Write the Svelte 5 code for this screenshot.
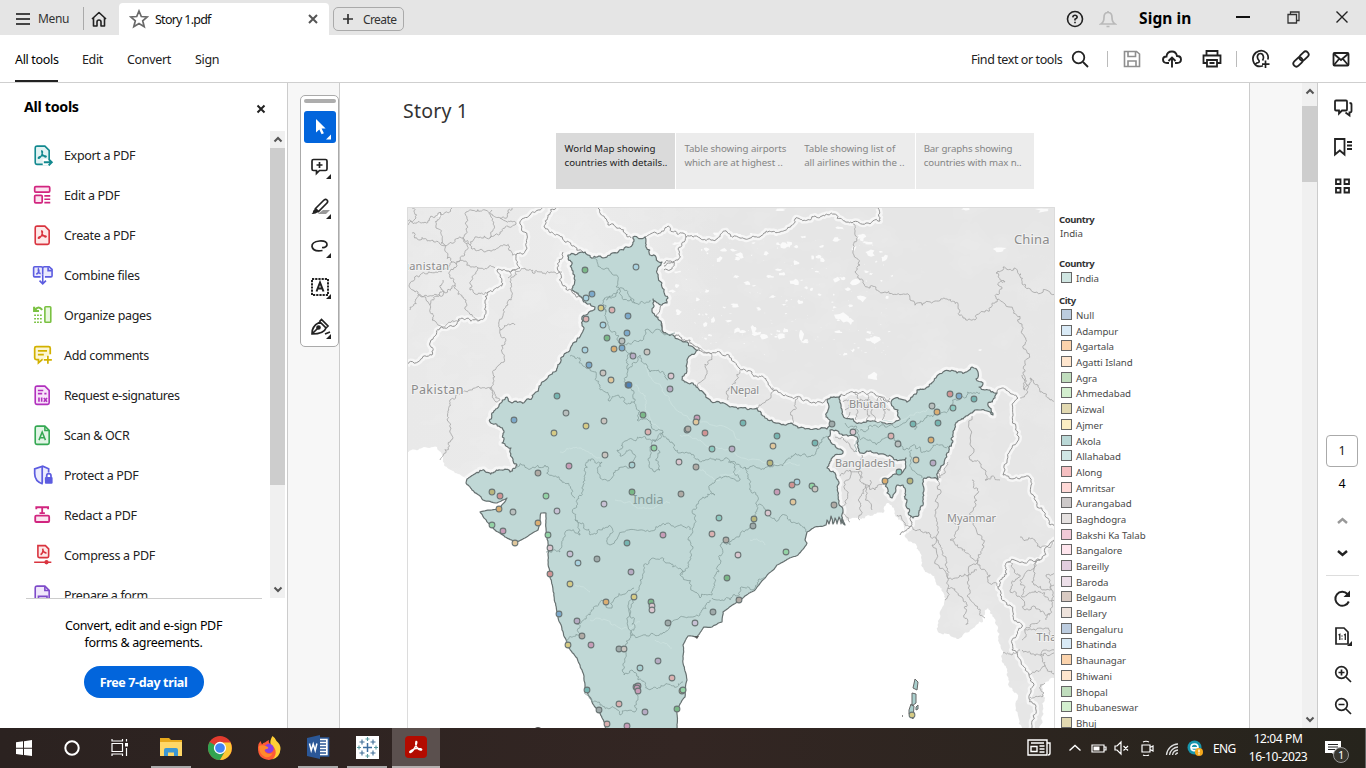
<script>
  // ---------- icon artwork ----------
  const page = (c, f) => `<path d="M4 2h8l4 4v11.500q0 1.500-1.500 1.500h-10q-1.500 0-1.500-1.500v-14q0-1.500 1.500-1.500z" fill="${f}" stroke="${c}" stroke-width="1.500"/>`;
  const acro = 'M9 6.500c1.500 0 .7 3-.8 5.300C7.300 13 6 14 5.800 13.200c-.2-.8 2.500-2.200 5-2.300 2-.1 3 .7 2.200 1.200-1.200.6-4-2.300-4-5.600z';
  const tools = [
    { t: 'Export a PDF', i: page('#12898f', '#e2f3f3') + `<path d="${acro}" stroke="#12898f" stroke-width="1.200"/><rect x="10" y="14" width="10" height="6" fill="#fff"/><path d="M11 17h7M15.500 14l3 3-3 3" stroke="#12898f" stroke-width="1.700"/>` },
    { t: 'Edit a PDF', i: `<g stroke="#d1257f" stroke-width="1.600"><rect x="2.500" y="2.500" width="14" height="5" rx="1" fill="#fce3f0"/><rect x="2.500" y="10.500" width="7" height="7" rx="1" fill="#fce3f0"/><path d="M11.500 11H17M11.500 14.200H17M11.500 17.400H17"/></g>` },
    { t: 'Create a PDF', i: page('#d9343f', '#fde9e9') + `<path d="${acro}" stroke="#d9343f" stroke-width="1.200"/>` },
    { t: 'Combine files', i: `<g stroke="#5c5ce0" stroke-width="1.500"><path d="M8 12H2.500Q1.500 12 1.500 11V3.500q0-1 1-1H8.500Q10 2.500 10 4V10M10 4q0-1.500 1.500-1.500H16L18.700 5v6q0 1-1 1H12" fill="#e9e9fc"/><path d="M4 9.500Q7.500 8 6 5 5.500 8 8 9M15 3v3.200h3.500M10 10v8.500M7 15.500l3 3 3-3"/></g>` },
    { t: 'Organize pages', i: `<g stroke="#7ac142" stroke-width="1.500"><rect x="12" y="2.500" width="5.500" height="14.500" rx=".8" fill="#eaf8e0"/><path d="M2 10.500H10M2 13.800H10M2 17H10" stroke-dasharray="1.700 1"/><path d="M9.500 5.500Q6 1 3 5.500M2 2.500v4h4.500" stroke-width="2"/></g>` },
    { t: 'Add comments', i: `<g stroke="#d2b100" stroke-width="1.600"><path d="M10 14.500H9.500L6 17.500V14.500H4Q2.500 14.500 2.500 13V4Q2.500 2.500 4 2.500H15.500Q17 2.500 17 4V9.500" fill="#fcf6d5"/><path d="M5.500 6.500H14M5.500 10H11M14.800 11V18.500M11 14.800H18.500"/></g>` },
    { t: 'Request e-signatures', i: page('#b130bd', '#f8e4fa') + `<path d="M5.500 6h5M5.500 9h4M11.500 9h2M6.500 12.500v4M9 12.500v4M11 13l3 3.500M14 13l-3 3.500" stroke="#b130bd" stroke-width="1.500"/>` },
    { t: 'Scan & OCR', i: page('#35a853', '#e2f5e6') + `<path d="M12 2v4h4M6.500 15l3-7.500 3 7.500M7.500 12.700h4" stroke="#35a853" stroke-width="1.400"/>` },
    { t: 'Protect a PDF', i: `<g stroke="#5c5ce0" stroke-width="1.600"><path d="M10 18.500Q2.500 16 2.500 9V4.500L10 2l5.500 2.500V8" fill="#ebebfd"/><path d="M9.500 2.500V18M13.700 12.500V11q0-2 2-2t2 2v1.500"/></g><rect x="12" y="12" width="7.200" height="6.500" rx="1" fill="#5c5ce0"/>` },
    { t: 'Redact a PDF', i: `<g stroke="#d1257f" stroke-width="1.700"><path d="M4 5V3H15V5M9.500 3V8.500M7 8.500H12"/><rect x="3" y="10.800" width="13" height="6" rx="1" fill="#fce3f0"/></g>` },
    { t: 'Compress a PDF', i: `<g stroke="#d9343f" stroke-width="1.500"><path d="M5.500 1.500h7l3 3v7q0 1.200-1.200 1.200H6.700q-1.200 0-1.200-1.200z" fill="#fde9e9"/><path d="M8 10Q11 8 10 4.500 10 8 13.500 8.500M2 17H18"/></g><circle cx="13.500" cy="17" r="2" fill="#d9343f"/>` },
    { t: 'Prepare a form', i: page('#7e4bc9', '#f0e7fb') + `<path d="M12 2v4h4M6 11.500h8v4H6z" stroke="#7e4bc9" stroke-width="1.500"/>` }
  ];
  const corner = '<path d="M24 19v5h-5z" fill="#222" stroke="none"/>';
  const quick = [
    '<path d="M12 4.500v13.500l3.300-3 2.300 4.800 2.300-1.100-2.300-4.600h4z" transform="translate(-2 -.5)" fill="#fff" stroke="none"/><path d="M25 21v5h-5z" transform="translate(0 -1.500)" fill="#fff" stroke="none"/>',
    '<path d="M6.500 4.500h12q1.500 0 1.500 1.500v8q0 1.500-1.500 1.500h-6l-3 3v-3h-3q-1.500 0-1.500-1.500V6q0-1.500 1.500-1.500zM12.500 7v6M9.500 10h6"/>' + corner,
    '<path d="M12 18l4-3h7l-4 4h-8z" fill="#999" stroke="none"/><path d="M8.500 13.500l8-8q2-2 3.500-.5t-.5 3.500l-8 8zM8 14l3 3"/><path d="M8 14l3 3q-2.500 2.500-6.500 2 1.500-1 1.500-2.500t2-2.500z" fill="#222" stroke="none"/>' + corner,
    '<path d="M15 12.500q4 .5 5-2.500.5-4.500-7.500-4-8 1-7.500 5.500 1 5.500 10.500 4"/><path d="M24 18v5h-5z" fill="#222" stroke="none"/>',
    '<path d="M5 4h16v16H5z" stroke-width="2" stroke-dasharray="2.200 1"/><path d="M9.500 16.500l3.500-9 3.500 9M10.500 13.500h5" stroke-width="2"/>' + corner,
    '<path d="M5 19Q4.500 11 13 7l6 6q-2 6-14 6zM5.500 18.500l5-5M12.500 6.500l2-2 6.500 6.500-2 2M18 19l5-2"/><circle cx="11.500" cy="12.500" r="1.500" fill="#222"/>' + corner
  ];

  // ---------- map geometry ----------
  let seed = 7;
  const rnd = () => ((seed = (seed * 16807) % 2147483647) / 2147483647);
  const parse = (s) => s.trim().split(/\s+/).map((p) => p.split(',').map(Number));
  function rough(s, amp = 0.22, closed = false) {
    let pts = parse(s);
    if (closed) pts.push(pts[0]);
    for (let k = 0; k < 4; k++) {
      const out = [pts[0]];
      for (let i = 1; i < pts.length; i++) {
        const [a, b] = [pts[i - 1], pts[i]];
        const dx = b[0] - a[0], dy = b[1] - a[1];
        const len = Math.hypot(dx, dy);
        if (len > 2.2) {
          const d = (rnd() - 0.5) * 2 * (len < 9 ? amp * 1.7 : amp);
          out.push([(a[0] + b[0]) / 2 - dy * d, (a[1] + b[1]) / 2 + dx * d]);
        }
        out.push(b);
      }
      pts = out;
    }
    return 'M' + pts.map((p) => p[0].toFixed(1) + ',' + p[1].toFixed(1)).join('L') + (closed ? 'Z' : '');
  }

  // the peninsula coast is smooth, the land frontier is ragged
  const westCoast = '677,732 607,732 600,713 592,702 585,687 582,670 577,658 568,647 562,630 558,617 553,590 550,577 548,560 548,543 546,528 546,513 541,513 540,521 538,530 525,538 515,543 505,537 495,530 480,512 489,510 500,508 507,498 497,503 483,500 472,490 466,483 467,479 476,473';
  const frontier = '476,473 493,473 510,472 517,465 511,448 502,443 500,427 490,422 492,413 507,397 512,403 532,398 542,382 553,372 562,357 570,350 573,343 582,333 582,317 595,307 585,302 572,290 575,280 572,270 568,255 582,252 603,258 617,253 630,247 633,237 645,237 646,247 650,255 662,262 657,273 662,287 668,298 667,303 662,305 653,299 652,310 658,317 662,330 673,335 687,342 698,350 687,360 687,368 682,380 693,383 703,392 730,407 738,409 757,408 765,418 778,423 798,428 827,429 832,425 826,417 828,399 840,396 841,408 845,418 860,423 880,422 900,420 898,410 891,403 892,400 907,402 917,390 933,382 943,372 957,373 968,371 972,367 978,372 976,379 983,383 979,387 985,390 997,393 995,398 988,403 993,415 987,411 972,413 955,425 952,443 947,453 938,480 924,478 923,493 919,512 913,518 909,515 907,500 903,485 897,485 892,498 887,493 883,480 892,476 902,473 906,458 887,456 860,453 857,443 857,437 845,435 830,430 828,437 835,445 843,453 832,458 827,468 835,473 839,482 838,495 843,510 845,525';
  const eastCoast = '845,525 842,518 841,524 839,517 837,524 835,518 833,524 831,516 829,524 827,520 826,525 815,527 807,532 805,540 807,543 798,555 777,565 765,578 755,590 740,600 723,612 722,622 712,627 704,627 697,637 688,636 683,645 683,663 687,680 685,697 677,708 677,732';
  const india = rough(westCoast, 0.05) + rough(frontier, 0.15).replace('M', 'L') + rough(eastCoast, 0.04).replace('M', 'L') + 'Z';
  const land = 'M300,150L1160,150L1160,678L' + rough('1054,678 1045,683 1043,707 1035,732 1022,732 1018,697 1008,677 1003,653 998,627 988,608 983,622 972,629 960,638 949,634 938,632 940,618 944,603 940,587 928,573 920,553 905,537 897,517 887,503 883,513 865,518 848,520 842,522', 0.16).slice(1) + 'L700,540L560,490L467,477L' + rough('467,477 455,473 443,462 437,447 422,448 400,453', 0.12).slice(1) + 'L300,453Z';

  // country borders get a pale halo
  const borders = [
    '543,207 530,215 520,224 527,235 526,250 516,255 520,268 507,271 497,270 503,284 488,292 486,312 480,320 462,318 440,328 431,340 432,355 407,366',
    '556,207 548,215 544,227 560,236 572,246 583,252',
    '563,252 562,284 572,292 583,300',
    '598,208 608,225 620,228 631,238',
    '645,237 668,226 683,233 686,237 700,238 713,240 727,232 740,238 760,237 780,232 795,219 815,216 834,214 852,223 866,223 880,221 878,208',
    '686,237 678,260 664,264',
    '664,266 674,262 670,270 664,270',
    '662,304 656,316 664,332 680,337 698,347 720,352 742,370 752,372 766,380 776,390 796,397 828,399 841,394 856,392 875,394 890,402',
    '997,393 1002,388 1018,398 1019,437 1003,475 1030,478 1035,500 1050,525 1060,527',
    '900,535 912,522 910,512',
    '1060,540 1040,560 1008,562 1004,577 998,587 1010,605 1022,627 1012,650 1029,675 1029,698 1036,710 1028,732'
  ].map((s) => rough(s, 0.18));

  const regions = [
    '853,224 857,240 853,251 860,265 855,272 870,288 885,292 910,300 935,301 947,299 958,307 963,318 975,320 985,312 997,302 998,285 1005,282 996,273 1003,267 1014,268 1022,283 1033,292 1060,300',
    '997,300 1010,307 1022,330 1024,345 1025,370 1025,390 1030,378 1040,392 1050,400 1060,402', '1020,398 1026,380 1022,375',
    '972,416 970,460 985,470 985,480 992,476 1000,480',
    '948,462 937,478 935,510 937,535', '945,454 937,480',
    '972,480 976,495 970,515 982,545 980,565 988,580 998,587',
    '897,515 905,525 925,532 937,540 946,557 948,575 945,600',
    '937,535 932,545 947,577 960,575 977,570',
    '950,520 958,530 950,540 965,550 978,560 970,590 975,605 985,618',
    '948,588 962,597 966,612 966,625',
    '1040,560 1020,580 1022,597 1040,592 1054,600',
    '1008,562 1020,575 1010,590 1025,610 1050,615',
    '1025,630 1045,628 1060,645', '1029,675 1045,665 1044,650 1060,655', '1045,665 1054,680',
    '1022,650 1040,655 1060,650', '1003,653 1012,655 1020,650', '1030,697 1042,697 1045,683',
    '1040,560 1034,585 1046,590 1060,585', '1060,560 1046,575 1052,600 1046,620', '1020,537 1040,548 1060,538', '1022,640 1030,625 1040,620',
    '407,220 425,222 440,212 452,208', '412,233 420,240 440,244 463,238 466,212', '440,212 436,228 441,243 452,262 436,272 410,283', '407,226 416,218 412,208',
    '463,238 470,245 490,238 500,232 516,224', '490,238 492,210', '463,238 465,255 450,275 455,285 466,300 480,320', '470,245 485,252 500,246 516,255',
    '466,212 485,210 500,218 516,224', '410,283 415,292 430,305 432,320 460,320', '452,262 478,268 495,268', '478,268 470,290 488,292', '410,310 418,295 440,296 443,280', '500,218 512,208', '455,285 440,292 430,305',
    '516,271 510,282 508,305 500,330 502,352 495,370 490,388 500,400', '508,278 526,270 540,272 562,272', '500,330 515,325',
    '500,400 487,388 470,390 450,400 447,420 451,440 440,460',
    '740,370 736,380 728,400', '772,388 768,400 757,408', '798,397 793,410 791,425',
    '698,349 712,356 706,375 698,387', '862,455 860,470 866,485 858,500 860,520', '850,470 846,500 850,522', '866,485 875,490 886,484', '870,480 872,510', '840,476 850,470 862,478', '835,437 850,445 857,452',
    '845,410 855,404 865,410 878,404 890,410', '855,392 856,420', '868,395 866,422', '880,398 882,420', '843,402 860,399 890,398', '850,412 848,420', '872,408 874,422'
  ].map((s) => rough(s, 0.22));

  const states = [
    '593,257 600,267 620,290 635,303 650,300', '618,292 603,300 606,312 598,308', '606,312 610,330 622,345 632,352 628,370 627,385 634,392 634,402',
    '635,303 622,288 606,300', '622,345 640,340 645,330 675,333', '570,356 580,358 583,366 596,372 600,385 608,400 622,397 625,403 634,402',
    '634,402 640,412 637,420 648,420 663,432 655,442 640,437 625,441 617,450 620,456 632,452 633,465 618,470 612,478 600,478 602,462 588,460 585,475 583,485 577,500 575,520 580,535',
    '628,370 640,355 650,372 668,380', '517,467 545,465 560,480 575,498', '663,432 675,450 690,453 705,460 725,458 735,465 740,480',
    '663,432 654,440 648,460 655,472 660,470 658,450', '728,462 745,467 758,468 770,467 785,462 800,456 812,455 822,442 828,437',
    '740,480 715,482 710,485 715,495 700,500 695,520 688,540 690,560 680,575 700,598 712,595 715,575 720,560 720,545 730,545 740,535 755,520 758,500 750,485 745,467',
    '758,505 775,520 785,515 800,525 806,532', '575,520 590,535 612,528 610,545 640,530 655,530 665,525 690,530',
    '546,552 560,552 570,530 580,535', '634,598 640,580 650,560 670,563 682,575', '634,598 633,635 650,635 670,625 688,617 700,615 710,600',
    '576,622 590,615 602,600 612,608 634,588', '633,598 628,605 634,620 632,635', '576,622 580,635 568,643', '633,635 624,650 624,675 632,670 638,680 650,690 665,685 683,682',
    '585,692 600,705 620,715 635,712 638,700 636,690', '712,598 730,600 740,588 752,590 765,578', '845,423 858,430 856,452', '860,440 885,438 898,440 905,450 913,445 925,452',
    '915,430 925,418 945,412 958,400 980,393', '860,430 885,427 910,418', '925,452 940,445 950,448', '922,478 912,470 912,450'
  ].map((s) => rough(s, 0.22));

  const rivers = ['635,385 645,405 660,430', '680,435 700,440 725,450 760,460 800,465', '645,365 665,395 690,420 740,440', '560,452 580,448 600,458', '700,470 720,480', '590,620 620,628 640,622', '850,428 880,423 910,415 940,405', '720,475 740,470', '575,585 590,592', '655,640 672,648', '750,540 765,545', '615,500 640,508 670,503'].map((s) => rough(s, 0.15));

  const blob = (x, y, w, h) => {
    let d = '';
    for (let i = 0; i < 9; i++) {
      const a = (i / 9) * 6.283, r = 0.35 + rnd() * 0.75;
      d += (i ? 'L' : 'M') + (x + Math.cos(a) * w * r).toFixed(1) + ',' + (y + Math.sin(a) * h * r).toFixed(1);
    }
    return d + 'Z';
  };
  const lakes = Array.from({ length: 230 }, () => {
    const x = 668 + rnd() * 225, y = 232 + rnd() * 125, w = 0.5 + Math.pow(rnd(), 3) * 5;
    return y < 345 || x > 745 ? blob(x, y, w, w * (0.3 + rnd() * 0.7)) : '';
  }).join('') + [[842, 317, 8, 6], [873, 340, 8, 4], [782, 336, 6, 4], [754, 329, 4, 6], [801, 334, 3, 8], [870, 253, 6, 4], [1000, 250, 8, 3], [873, 377, 6, 5], [850, 321, 5, 4], [735, 305, 5, 3], [1044, 210, 10, 3], [965, 209, 6, 2], [737, 330, 6, 4], [868, 243, 7, 2], [855, 282, 6, 4], [840, 228, 6, 2], [780, 210, 8, 2], [440, 215, 6, 2], [980, 350, 3, 1], [872, 340, 4, 3]].map((b) => blob(...b)).join('');

  const C = { g: '#7ab887', G: '#93d3a5', b: '#7ca9cb', B: '#4f80b5', l: '#a9d2e0', y: '#d6cb85', k: '#b9b67c', o: '#dbae72', O: '#e0c79c', p: '#dab0b0', r: '#d19393', m: '#c79cb7', v: '#b7abc3', V: '#c9c1d5', w: '#dac6cf', s: '#b9bfbe', a: '#9faaaa', n: '#b0aaa4', t: '#76b5b1', T: '#8dc9c0', c: '#c9c4bf', q: '#a9d0d2' };
  const dots = `585,270,g 636,267,l 592,294,b 586,298,l 601,308,y 612,310,p 586,319,p 628,316,b 603,325,l 627,333,b 607,338,g 622,341,s 614,349,o 622,348,b 585,350,l 633,356,v 647,352,c
589,365,b 603,373,c 611,380,O 671,376,w 628,385,B 629,385,B 670,389,v 557,396,t 566,413,s 514,420,b 643,415,g 604,421,c 586,426,y 554,433,y 697,418,m 696,422,O 648,432,p 687,430,a 688,429,n 705,433,r 712,449,T 654,448,G 605,455,c 632,465,q 679,462,w 696,467,n 569,466,m 538,473,n 492,492,k 500,496,r 546,496,G 632,492,g 681,494,n 604,504,V 499,509,o 513,512,s 557,511,V 538,523,o 492,525,G 503,531,m 719,518,T 548,535,G 663,535,m 712,534,p
743,423,t 777,436,t 773,446,O 732,449,v 815,443,t 770,463,k 797,482,l 792,485,r 777,492,m 812,486,G 815,489,c 793,502,O 834,505,n 768,513,w 754,519,k 753,526,a 726,540,n
950,394,r 959,396,b 974,399,t 932,406,s 937,412,o 953,408,T 832,424,a 853,432,w 913,424,t 938,423,t 891,436,p 898,444,s 931,440,o 916,460,O 933,463,v 899,472,T 910,481,k 885,481,o
515,543,O 550,548,w 570,554,V 627,543,t 578,563,l 597,559,a 738,555,w 786,552,G 631,572,v 550,574,r 570,584,y 727,578,g 606,602,o 634,597,y 651,602,g 652,606,w 652,610,w 739,600,n 559,614,b 577,621,v 713,612,a 668,623,a 695,623,V 582,636,n 568,645,y 591,645,m 619,649,a 624,649,c 658,661,v 640,668,q 672,678,p 587,690,t 636,687,a 638,686,m 637,688,m 638,691,m 682,691,o 683,690,G 599,710,a 619,704,p 645,712,v 677,709,g 607,724,p 627,726,m 912,715,y`
    .split(/\s+/).map((s) => s.split(',')).map(([x, y, c]) => ({ x: +x, y: +y, c: C[c] }));

  // ---------- legend ----------
  const sw = ['#bcccdf', '#d9eaf6', '#fbd3ac', '#ffe6ce', '#c0ddbd', '#d3efcf', '#e2d9b1', '#fbedc3', '#bad8d6', '#d0e6e4', '#f5bfc1', '#ffd9d7', '#cdc9c9', '#e5e1e0', '#f0c9d7', '#ffe5ed', '#e1cddf', '#eddfe9', '#d9cac2', '#efe3dc'];
  const cities = ['Null', 'Adampur', 'Agartala', 'Agatti Island', 'Agra', 'Ahmedabad', 'Aizwal', 'Ajmer', 'Akola', 'Allahabad', 'Along', 'Amritsar', 'Aurangabad', 'Baghdogra', 'Bakshi Ka Talab', 'Bangalore', 'Bareilly', 'Baroda', 'Belgaum', 'Bellary', 'Bengaluru', 'Bhatinda', 'Bhaunagar', 'Bhiwani', 'Bhopal', 'Bhubaneswar', 'Bhuj'];
  const tabs = [['World Map showing', 'countries with details..'], ['Table showing airports', 'which are at highest ..'], ['Table showing list of', 'all airlines within the ..'], ['Bar graphs showing', 'countries with max n..']];
</script>

{#snippet ico(body, size, left = 0, color = '#222', sw = 1.6)}
  <svg class="ico" width={size} height={size} viewBox="0 0 {size} {size}" style="margin-left:{left}px" fill="none" stroke={color} stroke-width={sw}>{@html body}</svg>
{/snippet}

<div class="screen">
  <header class="title">
    {@render ico('<path d="M1 4h14M1 9h14M1 14h14"/>', 18, 15, '#444', 1.8)}
    <span class="menu">Menu</span>
    <i class="vr"></i>
    {@render ico('<path d="M2 9L9 2.500 16 9M3.500 8v8H7v-4q0-2 2-2t2 2v4h3.500V8" stroke-linejoin="round"/>', 18, 6)}
    <div class="tab">
      {@render ico('<path d="M10 2l2.300 5.500 6 .4-4.600 3.900 1.500 5.900-5.200-3.200L4.800 17.700l1.500-5.900L1.700 7.900l6-.4z"/>', 20, 10, '#6a6a6a', 1.7)}
      <span>Story 1.pdf</span>
      {@render ico('<path d="M2 2l8 8M10 2l-8 8"/>', 12, 95, '#555', 2)}
    </div>
    <div class="create">
      {@render ico('<path d="M6 1v10M1 6h10"/>', 12, 8, '#333', 1.7)}
      <span>Create</span>
    </div>
    <div class="right">
      {@render ico('<circle cx="9" cy="9" r="7.500"/><path d="M6.800 7.300Q7 5.200 9 5.200t2.200 1.900Q11 8.300 9 9.300V10.500M9 11.800v1.500"/>', 18)}
      {@render ico('<path d="M2 14q3-2 3-6.500Q5 2.500 9 2.500t4 5Q13 12 16 14zM7.500 16.500h3M9 1v2"/>', 18, 15, '#b9b9b9', 1.700)}
      <b>Sign in</b>
      {@render ico('<path d="M0 6h14"/>', 14, 46, '#111', 2)}
      {@render ico('<path d="M2 3.500h8.500v8.500H2zM4.500 3V1h8.500v8.500h-2"/>', 14, 36, '#333', 1.3)}
      {@render ico('<path d="M1.500 .5l11 11M12.500 .5l-11 11"/>', 14, 35, '#222', 1.4)}
    </div>
  </header>

  <nav class="bar">
    <span class="on">All tools</span><span>Edit</span><span>Convert</span><span>Sign</span>
    <div class="right">
      <span class="find">Find text or tools</span>
      {@render ico('<circle cx="7.500" cy="7.500" r="5.800"/><path d="M12 12l5 5"/>', 18, 9, '#222', 1.8)}
      <i class="vr2"></i>
      {@render ico('<path d="M2 1.500h11.500L16.500 4v12.500H1.500V1.500zM5 2v4.500h7.500V2M5 16v-5h8v5"/>', 18, 15, '#8e8e8e', 1.6)}
      {@render ico('<path d="M7 14H5Q1 14 1 10.500 1 7.500 4.500 7.500 5 2.500 10 2.500q4 0 5 4.500 4 0 4 3.500T15 14h-2M10 18.500V9M6.500 12L10 8.500l3.500 3.500"/>', 20, 21, '#222', 1.9)}
      {@render ico('<path d="M4.500 6V2h11v4M4.500 14H1.500V6.500h17V14h-3M5 11h10v6.500H5zM7.500 14h5"/>', 20, 20, '#222', 1.8)}
      <i class="vr2 b"></i>
      {@render ico('<path d="M12 16.800Q6 19 3 14 0 8 5 3.500q6-4 10.500.500 2.500 3 1.300 6.500M4.500 15.500q1-2 3-2 1-.5.500-2-2-2-1.500-4.500Q7 4.500 9.500 4.500T12.500 8q0 2-1 3.500M14.500 11.500v7.500M11 15.200h7.500"/>', 20, 14, '#222', 1.7)}
      {@render ico('<g transform="rotate(-45 9 9)"><rect x="-.5" y="6" width="10.500" height="6" rx="3"/><rect x="8" y="6" width="10.500" height="6" rx="3"/></g>', 18, 21, '#222', 1.8)}
      {@render ico('<rect x="1.500" y="3" width="15" height="12.500" rx="1"/><path d="M2 4l7 6 7-6M2 15l5-6M16 15l-5-6"/>', 18, 22, '#222', 1.8)}
    </div>
  </nav>

  <main>
    <aside class="left">
      <div class="head"><b>All tools</b>{@render ico('<path d="M1.500 1.500l7 7M8.500 1.500l-7 7"/>', 10, 0, '#222', 2)}</div>
      <div class="scroller">
        <ul>
          {#each tools as tool}
            <li><svg width="22" height="22" viewBox="0 0 20.500 20.500" fill="none">{@html tool.i}</svg><span>{tool.t}</span></li>
          {/each}
        </ul>
        <div class="sb">
          {@render ico('<path d="M1.500 6.500L5 3l3.500 3.500"/>', 10, 0, '#555', 2)}
          <div class="thumb"></div>
          {@render ico('<path d="M1.500 3.500L5 7l3.500-3.500"/>', 10, 0, '#555', 2)}
        </div>
      </div>
      <hr />
      <p>Convert, edit and e-sign PDF<br />forms &amp; agreements.</p>
      <div class="trial">Free 7-day trial</div>
    </aside>

    <div class="gutter">
      <div class="palette">
        <div class="grip"></div>
        {#each quick as q, i}
          <div class="q" class:sel={i === 0}><svg width="26" height="26" viewBox="0 0 26 26" fill="none" stroke="#222" stroke-width="1.700">{@html q}</svg></div>
        {/each}
      </div>
    </div>

    <section class="doc">
      <h1>Story 1</h1>
      <div class="tabs">
        {#each tabs as t, i}
          <div class:active={i === 0}>{t[0]}<br />{t[1]}</div>
        {/each}
      </div>
      <div class="viz">
        <svg class="map" width="648" height="521" viewBox="407 207 648 521" fill="none">
          <defs>
            <filter id="relief" x="0" y="0" width="100%" height="100%">
              <feTurbulence type="fractalNoise" baseFrequency=".02 .03" numOctaves="4" seed="4" />
              <feColorMatrix values="0 0 0 0 1  0 0 0 0 1  0 0 0 0 1  1.800 0 0 0 -.75" />
            </filter>
            <linearGradient id="west" x1="407" x2="720" y1="0" y2="0" gradientUnits="userSpaceOnUse">
              <stop offset="0" stop-color="#e9e9e9" /><stop offset=".6" stop-color="#ebebeb" /><stop offset="1" stop-color="#e6e6e6" />
            </linearGradient>
            <clipPath id="landclip"><path d={land} /></clipPath>
          </defs>
          <rect x="407" y="207" width="648" height="521" fill="#fff" />
          <path d={land} fill="url(#west)" />
          <g clip-path="url(#landclip)">
            <rect x="407" y="207" width="648" height="521" filter="url(#relief)" opacity=".18" />
            {#each borders as d}<path {d} stroke="#f6f6f6" stroke-width="6" stroke-linejoin="round" />{/each}
            <path d={india} stroke="#f6f6f6" stroke-width="7" stroke-linejoin="round" />
          </g>
          <path d={lakes} fill="#fafafa" />
          <g stroke="#a6a6a6" stroke-width=".85">{#each regions as d}<path {d} />{/each}</g>
          <g stroke="#8c8c8c" stroke-width=".95">{#each borders as d}<path {d} />{/each}</g>
          <path d={india} fill="#c0d8d6" stroke="#667070" stroke-width="1.200" stroke-linejoin="round" />
          <g stroke="#cde2e0" stroke-width=".8">{#each rivers as d}<path {d} />{/each}</g>
          <g stroke="#869e9c" stroke-width=".8">{#each states as d}<path {d} />{/each}</g>
          <path d="M915,679l3,3-1,8-4,-2zM912,693l4,1 0,9-4,3zM909,710l2-6 3,2-1,13-4-5zM916,707l2,-2 0,4-2,1zM902,716h1z" fill="#a9cfcd" stroke="#666" stroke-width="1" />
          <path d="M535,728q3-2 6,0zM694,636l5,0-2,3z" fill="#555" />
          <g font-family="'Noto Sans'" fill="#8b8b8b" stroke="#f1f1f1" stroke-width="2" paint-order="stroke">
            <text x="406" y="270" font-size="11" textLength="43">ıanistan</text>
            <text x="411" y="394" font-size="12.500" textLength="52.500">Pakistan</text>
            <text x="730" y="394" font-size="11" textLength="29">Nepal</text>
            <text x="849" y="408" font-size="11" textLength="37">Bhutan</text>
            <text x="835" y="467" font-size="11" textLength="60">Bangladesh</text>
            <text x="947" y="522" font-size="11" textLength="49">Myanmar</text>
            <text x="1014" y="244" font-size="13" textLength="35.500">China</text>
            <text x="1036.500" y="641" font-size="11" textLength="20">Tha</text>
          </g>
          <text x="633" y="504" font-family="'Noto Sans'" font-size="13" fill="#829896" textLength="30.500">India</text>
          {#each dots as p}<circle cx={p.x} cy={p.y} r="2.900" fill={p.c} stroke="#6a7575" stroke-width="1.050" />{/each}
          <path d="M407.500 728V207.500H1054.500V728" stroke="#dcdcdc" />
        </svg>
        <div class="legend">
          <b>Country</b>
          <span class="val">India</span>
          <b class="l2">Country</b>
          <div class="row r0"><i style="background:#d0e6e2"></i>India</div>
          <b class="l3">City</b>
          {#each cities as c, i}<div class="row"><i style="background:{sw[i % 20]}"></i>{c}</div>{/each}
        </div>
      </div>
    </section>

    <div class="pad"></div>
    <div class="sb main">
      {@render ico('<path d="M1.500 6.500L5 3l3.500 3.500"/>', 10, 0, '#555', 2)}
      <div class="thumb"></div>
      {@render ico('<path d="M1.500 3.500L5 7l3.500-3.500"/>', 10, 0, '#555', 2)}
    </div>

    <aside class="rail">
      {@render ico('<path d="M3 2.500h10q1 0 1 1v8q0 1-1 1H9l-3 3v-3H3q-1 0-1-1v-8q0-1 1-1zM16.500 5q2 0 2 1.500V13q0 1.500-2 1.500V17.500l-4-3"/>', 20, 0, '#222', 1.8)}
      {@render ico('<path d="M2 2h9.500v15.500L6.800 13.500 2 17.500zM14 5h5M14 8.500h5M14 12h5"/>', 20, 0, '#222', 1.8)}
      {@render ico('<path d="M3 3.500h4.500v4.500H3zM11.500 3.500H16v4.500h-4.500zM3 12h4.500v4.500H3zM11.500 12H16v4.500h-4.500z"/>', 20, 0, '#222', 1.8)}
      <div class="pg">1</div>
      <div class="tot">4</div>
      {@render ico('<path d="M2 9L6.500 5 11 9"/>', 13, 0, '#999', 2.4)}
      {@render ico('<path d="M2 4L6.500 8 11 4"/>', 13, 0, '#222', 2.4)}
      <hr />
      {@render ico('<path d="M15.800 12.500A7 7 0 1 1 14.500 5"/><path d="M17 1.500V8h-6.500z" fill="#222" stroke="none"/>', 19, 0, '#222', 2)}
      {@render ico('<path d="M3 2h8l4 4v12H3z"/><path d="M5.500 9l1.300-.7V14M9 9.500v1M9 12.500v1M11 9l1.300-.7V14" stroke-width="1.300"/><path d="M19 15v5h-5z" fill="#222" stroke="none"/>', 20, 0, '#222', 1.7)}
      {@render ico('<circle cx="7.500" cy="7.500" r="5.800"/><path d="M12 12l5 5M4.500 7.500h6M7.500 4.500v6"/>', 18, 0, '#222', 1.7)}
      {@render ico('<circle cx="7.500" cy="7.500" r="5.800"/><path d="M12 12l5 5M4.500 7.500h6"/>', 18, 0, '#222', 1.7)}
    </aside>
  </main>

  <footer>
    <div class="app">{@render ico('<path d="M0 2.300l7-1v6.400H0zM8 1.200L16 0v7.700H8zM0 8.700h7V15L0 14zM8 8.700h8V16l-8-1z" fill="#fff" stroke="none"/>', 16)}</div>
    <div class="app">{@render ico('<circle cx="9" cy="9" r="6.700"/>', 18, 0, '#fff', 2)}</div>
    <div class="app">{@render ico('<path d="M1 4.500h10.500v8H1zM1 0v2h10.500V0M1 17v-2h10.500v2M15.500 0v2.500M15.500 9v8"/><path d="M14 4h3v3.500h-3z" fill="#fff" stroke="none"/>', 18, 0, '#fff', 1.2)}</div>
    <div class="app run first">{@render ico('<path d="M1 3h9l2 2h11v16H1z" fill="#e8a91c" stroke="none"/><path d="M1 7h22v14H1z" fill="#ffd767" stroke="none"/><path d="M5 21v-6q0-2 2-2h10q2 0 2 2v6h-4v-3.500H9V21z" fill="#3c96d2" stroke="none"/>', 24)}</div>
    <div class="app">{@render ico('<circle cx="12" cy="12" r="12" fill="#e33b2e" stroke="none"/><path d="M1.600 6A12 12 0 0 0 12 24l5.200-9L12 12z" fill="#31a350" stroke="none"/><path d="M12 24A12 12 0 0 0 22.500 6.500H12l5.200 8.500z" fill="#fcc934" stroke="none"/><circle cx="12" cy="12" r="5.500" fill="#4285f4" stroke="#fff" stroke-width="1.300"/>', 24)}</div>
    <div class="app">{@render ico('<path d="M12 24Q.5 23 1 11.500 1.300 7 3.500 5L5 8.500Q6 6.500 8 6.500q2-2 4-2.500-1 2.500 1 4 6 0 9 4Q22 22 12 24z" fill="#ff5a36" stroke="none"/><path d="M15.500 0q3 2 4 5 4 3 4 8-.5 8-8 10.500 4-4 3-9-1-4-5-6-1-4 2-8.500z" fill="#ffcf36" stroke="none"/><circle cx="12" cy="12.500" r="4.700" fill="#8a3fe0" stroke="none"/><path d="M2 10q4-2 9 1 1 1.500-1.500 2-2 0-2 1.500 1 4.500 8 3-2 4.500-7.500 3.500Q2 18 2 10z" fill="#ff8a2c" stroke="none"/>', 24)}</div>
    <div class="app run">{@render ico('<path d="M12 3h10.500v18H12z" fill="#fff" stroke="#2b5797"/><path d="M14 6h6M14 9h6M14 12h6M14 15h6M14 18h6" stroke="#2b5797"/><path d="M1 3l13-3v24L1 21z" fill="#2b5797" stroke="none"/><path d="M3.500 8.500l1.700 7 2-6.500 2 6.500 1.700-7" stroke="#fff" stroke-width="1.500"/>', 24)}</div>
    <div class="app run">{@render ico('<rect width="23" height="23" fill="#fff" stroke="none"/><path d="M11.500 7v9M7 11.500h9" stroke="#3d6d9e" stroke-width="1.500"/><path d="M6 3.500v5M3.500 6h5M17 3.500v5M14.500 6h5M6 14.500v5M3.500 17h5M17 14.500v5M14.500 17h5" stroke="#3f6d96"/><path d="M11.500 1v4M9.500 3h4M11.500 18v4M9.500 20h4M1 11.500h4M3 9.500v4M18 11.500h4M20 9.500v4" stroke="#5b9aa0"/>', 23, 0, '#333', 1.1)}</div>
    <div class="app cur">{@render ico('<rect width="22" height="22" rx="4" fill="#b30b00" stroke="none"/><path d="M11 5.500c2-.5 0 5-3 9C6 17 4 17 5 15.500c1.500-2 6-3.500 9-3 3 0 3.500 2 1.500 1.500-3-.5-6-5-4.500-8.500z"/>', 22, 0, '#fff', 1.4)}</div>
    <div class="tray">
      {@render ico('<path d="M1 4h19v15H1zM20 7h3v10q0 2-2 2M4 7h13M4 10.500h6v5H4zM12.500 10h5M12.500 13h5M12.500 16h5"/>', 24, 0, '#fff', 1.4)}
      {@render ico('<path d="M1.500 9.500L7 4.500l5.500 5"/>', 14, 17, '#fff', 1.4)}
      {@render ico('<path d="M1 5h12v7H1zM13 7h2v3h-2"/><path d="M2.500 6.500h6v4h-6z" fill="#fff" stroke="none"/>', 16, 9, '#fff', 1.2)}
      {@render ico('<path d="M1 6h2l4-4v12l-4-4H1zM9.500 6l4.500 4.500M14 6L9.500 10.500"/>', 16, 7, '#fff', 1.2)}
      {@render ico('<path d="M2 5h8v7H2zM10 7.500l3-1.500v5l-3-1.500M3 2Q6 .5 9 2M3 15q3 1.500 6 0"/>', 16, 10, '#fff', 1.2)}
      {@render ico('<path d="M1.500 14A12 12 0 0 1 13 3M4.500 14A9 9 0 0 1 13 6M7.500 14A6 6 0 0 1 13 9M10.500 14Q11 12 13 12"/>', 14, 9, '#ddd', 1.3)}
      {@render ico('<circle cx="7.500" cy="7.500" r="7" fill="#1796ad" stroke="none"/><path d="M3.500 7.800h7.500Q11 4 7.500 4T4 7.500q0 4 6 3" stroke-width="1.700"/><circle cx="12" cy="12" r="4" fill="#f5a81c" stroke="none"/><path d="M12 9.500v3M12 13.300v1.200" stroke-width="1.300"/>', 16, 8, '#fff', 1.4)}
      <span class="eng">ENG</span>
      <div class="clock">12:04 PM<br />16-10-2023</div>
      <div class="note">
        {@render ico('<path d="M0 1h16v12h-5v4l-4-4H0z" fill="#fff" stroke="none"/><path d="M3 4.500h10M3 7h10M3 9.500h7" stroke="#222" stroke-width="1"/>', 18, 0)}
        <em>1</em>
      </div>
    </div>
  </footer>
</div>

<style>
  :global(body) { margin: 0; overflow: hidden; }
  .screen { width: 1366px; height: 768px; display: grid; grid-template-rows: 35px 47px 646px 40px; font-family: 'Noto Sans', sans-serif; font-size: 12.5px; letter-spacing: -0.33px; color: #222; background: #fff; }
  .screen * { box-sizing: border-box; }
  .ico { flex: none; display: block; }
  span, b { white-space: nowrap; }
  .title { background: #e5e5e5; display: flex; align-items: center; }
  .title > .ico, .menu, .vr { position: relative; top: 1px; }
  .menu { width: 45px; padding-left: 5px; font-size: 12px; color: #333; }
  .vr { width: 1px; height: 23px; background: #aaa; margin-left: 5px; }
  .tab { width: 210px; height: 32px; margin: 3px 0 0 11px; background: #fff; border-radius: 4px 4px 0 0; display: flex; align-items: center; color: #111; }
  .tab span { width: 57px; margin-left: 6px; letter-spacing: -0.75px; }
  .create { width: 71px; height: 24px; margin: 3px 0 0 4px; border: 1px solid #aaa; border-radius: 5px; display: flex; align-items: center; font-size: 12px; color: #333; letter-spacing: -0.6px; }
  .create span { margin-left: 9px; }
  .right { margin-left: auto; display: flex; align-items: center; }
  .title .right { padding-right: 17px; height: 100%; }
  .title .right b { font-size: 15.5px; width: 51px; margin-left: 23px; letter-spacing: 0.1px; color: #000; }
  .title .right > .ico:nth-child(-n + 2) { margin-top: 3px; position: relative; left: 1px; }
  .bar { display: flex; align-items: stretch; padding-left: 15px; gap: 24px; line-height: 49px; }
  .bar > span.on { border-bottom: 2px solid #222; color: #000; width: 43px; height: 47px; }
  .bar > span:nth-child(2) { width: 21px; }
  .bar > span:nth-child(3) { width: 44px; }
  .bar .right { padding-right: 16px; height: 47px; }
  .find { width: 91px; letter-spacing: -0.42px; margin-top: 1px; }
  .vr2 { width: 1px; height: 16px; background: #bbb; margin-left: 18px; }
  .vr2.b { margin-left: 14px; }
  main { display: grid; grid-template-columns: 288px 52px 910px 52px 16px 48px; border-top: 1px solid #cfcfcf; overflow: hidden; height: 646px; }
  .left { border-right: 1px solid #ccc; display: flex; flex-direction: column; min-height: 0; }
  .head { height: 48px; padding: 0 21px 0 24px; display: flex; justify-content: space-between; align-items: center; font-size: 14.3px; color: #000; }
  .head b { margin-top: -1px; }
  .head .ico { margin-top: 4px; }
  .scroller { height: 467px; display: flex; }
  ul { list-style: none; margin: 0; padding: 4px 0 0 32px; width: 270px; overflow: hidden; }
  li { height: 40px; display: flex; align-items: center; gap: 10px; }
  li:nth-child(7) span { letter-spacing: -0.42px; }
  .sb { width: 15px; background: #f0f0f0; display: flex; flex-direction: column; align-items: center; padding: 4px 0; }
  .sb .thumb { width: 15px; height: 337px; background: #cdcdcd; margin-top: 3px; }
  .sb .ico:last-child { margin-top: auto; }
  .left hr { width: 236px; margin: 0 0 0 26px; border: 0; border-top: 1px solid #ccc; }
  p { margin: 18px 0 15px; text-align: center; line-height: 17px; color: #000; }
  .trial { align-self: center; width: 120px; height: 32px; border-radius: 16px; background: #0265dc; color: #fff; font-weight: 700; text-align: center; line-height: 33px; letter-spacing: -0.35px; }
  .gutter { background: #f7f7f7; border-right: 1px solid #ccc; padding: 12px 0 0 12px; }
  .palette { width: 39px; height: 252px; border: 1px solid #aaa; border-radius: 5px; background: #fff; padding: 3px 3px 0; }
  .grip { height: 4px; width: 32px; border-radius: 2px; background: #adadad; }
  .q { width: 32px; height: 32px; display: flex; align-items: center; justify-content: center; margin: 8px 0; border-radius: 3px; padding-top: 2px; }
  .q.sel { background: #0265dc; }
  .q.sel svg { margin-left: -2px; }
  .doc { border-right: 1px solid #ccc; padding-left: 63px; font-size: 9.7px; letter-spacing: 0; }
  h1 { margin: 0; padding-top: 14px; height: 50px; font-size: 19.5px; line-height: 27px; font-weight: 400; color: #333; letter-spacing: 0.2px; }
  .tabs { display: flex; gap: 1px; width: 478px; height: 56px; margin-left: 153px; color: #858585; letter-spacing: -0.06px; }
  .tabs div { flex: 1; background: #ececec; padding: 9px 0 0 8.5px; line-height: 14px; white-space: nowrap; }
  .tabs div:nth-child(2) { box-shadow: 1px 0 #ececec; }
  .tabs div:last-child { padding-left: 8px; letter-spacing: -0.12px; }
  .tabs .active { background: #dadada; color: #222; letter-spacing: 0.02px; }
  .viz { display: flex; margin: 18px 0 0 4px; height: 521px; }
  .map { flex: none; }
  .legend { padding: 6px 0 0 4px; color: #4a4a4a; display: flex; flex-direction: column; letter-spacing: -0.06px; }
  .legend b { color: #333; font-size: 9.5px; line-height: 13px; height: 13px; flex: none; letter-spacing: -0.42px; }
  .val { padding-left: 1px; line-height: 16px; }
  .legend .l2 { margin: 15px 0 0; }
  .legend .r0 { margin-top: 1px; }
  .legend .l3 { margin: 7px 0 1px; }
  .row { display: flex; align-items: center; height: 15.7px; flex: none; gap: 4px; padding-left: 2px; white-space: nowrap; }
  .row i { width: 11px; height: 11px; border: 1px solid #666; margin-top: -2px; }
  .pad { background: #f7f7f7; }
  .sb.main { width: 16px; border-right: 1px solid #ccc; }
  .sb.main .thumb { height: 76px; margin-top: 9px; }
  .rail { display: flex; flex-direction: column; align-items: center; padding-top: 15px; }
  .rail > .ico { position: relative; left: 0.7px; }
  .rail > .ico:nth-child(2) { margin-top: 19px; }
  .rail > .ico:nth-child(3) { margin-top: 19px; }
  .pg { width: 32px; height: 32px; flex: none; margin-top: 239px; border: 1px solid #aaa; border-radius: 4px; text-align: center; line-height: 29px; }
  .tot { line-height: 20px; margin: 7px 0 20px; color: #000; }
  .tot + .ico + .ico { margin-top: 20px; }
  .rail hr { width: 33px; margin: 15px 0 13px; border: 0; border-top: 1px solid #ddd; flex: none; }
  .rail hr + .ico + .ico { margin-top: 18px; }
  .rail hr + .ico + .ico + .ico { margin-top: 19px; }
  .rail .ico:last-child { margin-top: 14px; }
  footer { background: linear-gradient(90deg, #2b2220, #332623 50%, #26241c); display: flex; color: #fff; }
  .app { width: 49px; height: 40px; display: flex; align-items: center; justify-content: center; }
  .app:nth-child(-n + 3) { width: 48px; }
  .app.run { width: 40px; margin: 0 4.5px; border-bottom: 2px solid #aaa; }
  .app.run.first { width: 40px; margin-left: 7px; }
  .app.cur { width: 48px; background: #5b504e; border-bottom: 2px solid #b5b1b0; }
  .tray { margin-left: auto; display: flex; align-items: center; letter-spacing: -0.4px; font-size: 12px; }
  .eng { margin-left: 10px; width: 24px; font-size: 12px; letter-spacing: -0.6px; }
  .clock { text-align: center; line-height: 18px; width: 60px; margin-left: 11px; white-space: nowrap; }
  .note { position: relative; width: 41px; margin-left: 17px; border-right: 1px solid #666; height: 40px; padding-top: 12px; }
  .note em { position: absolute; left: 8px; top: 19px; width: 16px; height: 16px; border-radius: 50%; background: #39372f; border: 1px solid #999; font: 11px/14px 'Noto Sans'; text-align: center; }
</style>
